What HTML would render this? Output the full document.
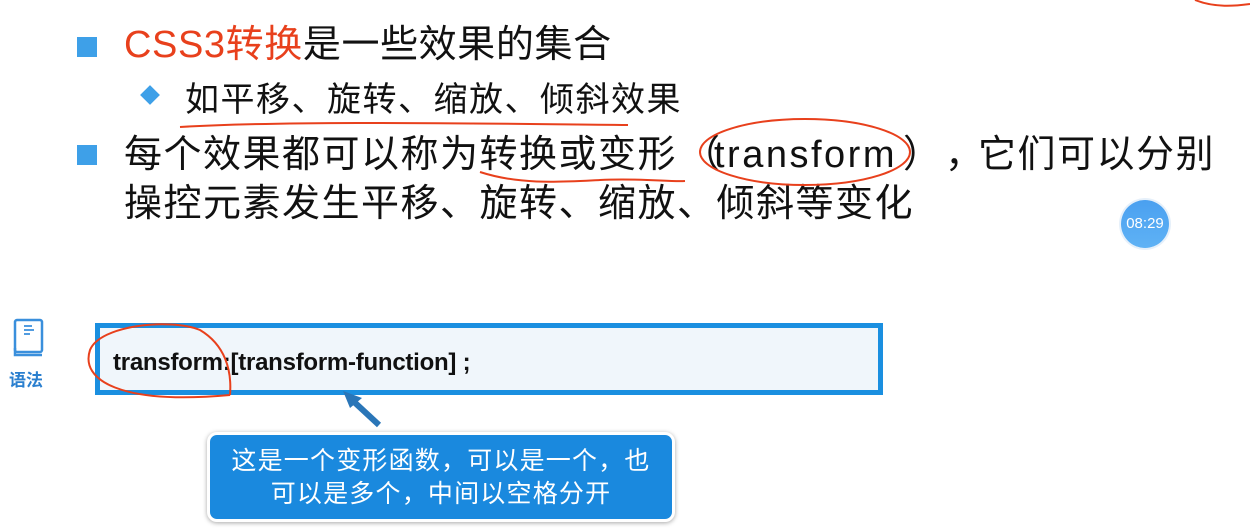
<!DOCTYPE html>
<html><head><meta charset="utf-8"><style>
body{margin:0;width:1250px;height:531px;background:#fff;position:relative;overflow:hidden;font-family:"Liberation Sans","Noto Sans CJK SC",sans-serif;color:#111}
.a{position:absolute;white-space:nowrap}
.sq{position:absolute;width:20px;height:20px;background:#3ea0e8}
.big{font-size:38px;line-height:46px;letter-spacing:1.5px}
</style></head><body>
<div class="sq" style="left:77px;top:37px"></div>
<div class="a big" style="left:124px;top:22px;letter-spacing:0.6px"><span style="color:#e8401c">CSS3转换</span>是一些效果的集合</div>
<div class="a" style="left:143px;top:88px;width:14px;height:14px;background:#3ea0e8;transform:rotate(45deg)"></div>
<div class="a" style="left:185px;top:78px;font-size:34px;line-height:44px;letter-spacing:1.5px">如平移、旋转、缩放、倾斜效果</div>
<div class="sq" style="left:77px;top:145px"></div>
<div class="a big" style="left:124px;top:132px">每个效果都可以称为转换或变形</div>
<div class="a big" style="left:682px;top:132px">（</div>
<div class="a big" style="left:714px;top:132px;letter-spacing:2.5px">transform</div>
<div class="a big" style="left:903px;top:132px">）</div>
<div class="a big" style="left:945px;top:132px">，</div>
<div class="a big" style="left:978px;top:132px">它们可以分别</div>
<div class="a big" style="left:124px;top:181px">操控元素发生平移、旋转、缩放、倾斜等变化</div>

<div class="a" style="left:1121px;top:200px;width:48px;height:48px;border-radius:50%;background:linear-gradient(#4aa0f0,#5fb2f5);box-shadow:0 0 0 2px #e6f0fa;color:#fff;font-size:15px;line-height:48px;text-align:center">08:29</div>

<svg class="a" style="left:12px;top:318px" width="34" height="40" viewBox="0 0 34 40"><rect x="3" y="2" width="27" height="32" rx="2" fill="none" stroke="#3a8fdc" stroke-width="2.5"/><path d="M3 30 L3 37 L30 37" fill="none" stroke="#3a8fdc" stroke-width="2.5"/><path d="M12 8h8M12 12h10M12 16h6" stroke="#3a8fdc" stroke-width="1.8"/></svg>
<div class="a" style="left:9px;top:366px;font-size:17px;font-weight:bold;color:#2a7fcf">语法</div>

<div class="a" style="left:95px;top:323px;width:778px;height:62px;border:5px solid #1a8fe0;background:#f0f6fb"></div>
<div class="a" style="left:113px;top:349px;font-size:24px;font-weight:bold;letter-spacing:-0.25px">transform:[transform-function] ;</div>

<div class="a" style="left:207px;top:432px;border:3px solid #fff;border-radius:10px;background:#1a89de;box-shadow:0 1px 5px rgba(0,0,0,.35);color:#fff;font-size:25px;line-height:33px;letter-spacing:1.2px;text-align:center;padding-top:10px;box-sizing:border-box;width:468px;height:90px">这是一个变形函数，可以是一个，也<br>可以是多个，中间以空格分开</div>

<svg class="a" style="left:0;top:0" width="1250" height="531">
<path d="M379 425 L352 400" stroke="#2a76b8" stroke-width="6"/>
<path d="M343 391 L362 398 L350 408 Z" fill="#2a76b8"/>
<g fill="none" stroke="#e8401c" stroke-width="2">
<path d="M180 127 C300 120 500 124 628 125"/>
<path d="M480 172 C520 185 560 182 600 180 C640 178 670 182 685 181"/>
<ellipse cx="805" cy="152" rx="105" ry="33"/>
<path d="M230 395 C120 405 80 380 90 350 C100 325 170 318 200 330 C225 345 232 370 230 395"/>
<path d="M1195 0 C1215 8 1235 6 1250 4"/>
</g>
</svg>
</body></html>
